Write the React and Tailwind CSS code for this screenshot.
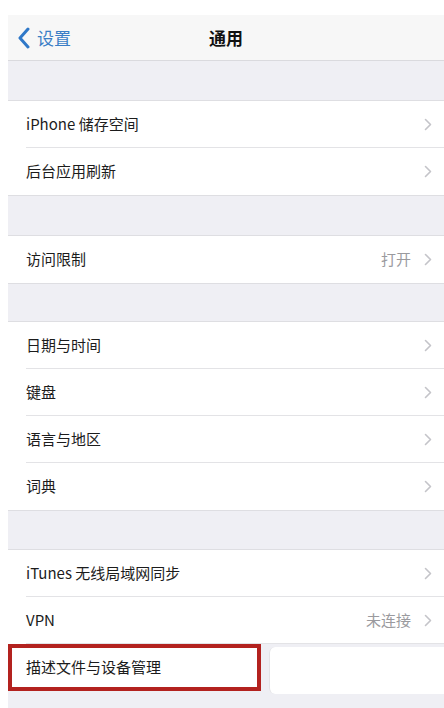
const font = { fontFamily: '"Noto Sans CJK SC", "Noto Sans", sans-serif' };

function Chevron() {
  return (
    <svg width="8" height="13" viewBox="0 0 8 13" className="shrink-0">
      <path d="M1.5 1.5 L6.5 6.5 L1.5 11.5" fill="none" stroke="#c4c4c9" strokeWidth="1.6" strokeLinecap="round" strokeLinejoin="round" />
    </svg>
  );
}

function Row({ label, value, last }) {
  return (
    <div className="h-[47px] bg-white pl-[18px] flex">
      <div className={`flex-1 flex items-center pr-[12px] ${last ? "" : "border-b border-[#e3e3e6]"}`}>
        <span className="flex-1 text-[15px] text-[#1c1c1c]">{label}</span>
        {value && <span className="text-[15px] text-[#9a9a9e] mr-[13px]">{value}</span>}
        <Chevron />
      </div>
    </div>
  );
}

function Group({ rows }) {
  return (
    <div className="border-y border-[#dedee2]">
      {rows.map((r, i) => (
        <Row key={r.label} label={r.label} value={r.value} last={i === rows.length - 1} />
      ))}
    </div>
  );
}

export default function App() {
  return (
    <div className="w-[444px] h-[708px] bg-white pl-2 pt-[15px] overflow-hidden" style={font}>
      <div className="h-full bg-[#efeff4]">
        {/* Nav bar */}
        <div className="h-[46px] bg-[#f7f7f7] border-b border-[#dadade] flex items-center relative">
          <div className="flex items-center pl-[9px] text-[#3a7ec6]">
            <svg width="14" height="22" viewBox="0 0 14 22">
              <path d="M11 2 L3 11 L11 20" fill="none" stroke="#2f78c8" strokeWidth="3" strokeLinecap="round" strokeLinejoin="round" />
            </svg>
            <span className="ml-[6px] text-[17px]">设置</span>
          </div>
          <div className="absolute left-0 right-0 text-center text-[17px] font-bold text-[#111] pointer-events-none">通用</div>
        </div>

        <div className="h-[39px]" />
        <Group rows={[{ label: "iPhone 储存空间" }, { label: "后台应用刷新" }]} />

        <div className="h-[39px]" />
        <Group rows={[{ label: "访问限制", value: "打开" }]} />

        <div className="h-[37px]" />
        <Group rows={[{ label: "日期与时间" }, { label: "键盘" }, { label: "语言与地区" }, { label: "词典" }]} />

        <div className="h-[38px]" />
        <div className="border-t border-[#dedee2]">
          <Row label="iTunes 无线局域网同步" />
          <Row label="VPN" value="未连接" />
          <div className="flex h-[50px]">
            <div className="w-[253px] h-[47px] border-[4px] border-[#b3221f] bg-white flex items-center pl-[14px]">
              <span className="text-[15px] text-[#1c1c1c]">描述文件与设备管理</span>
            </div>
            <div className="flex-1 ml-[8px] mt-[3px] h-[47px] bg-white rounded-l-[6px] border-l border-[#e3e3e6]" />
          </div>
        </div>
      </div>
    </div>
  );
}
